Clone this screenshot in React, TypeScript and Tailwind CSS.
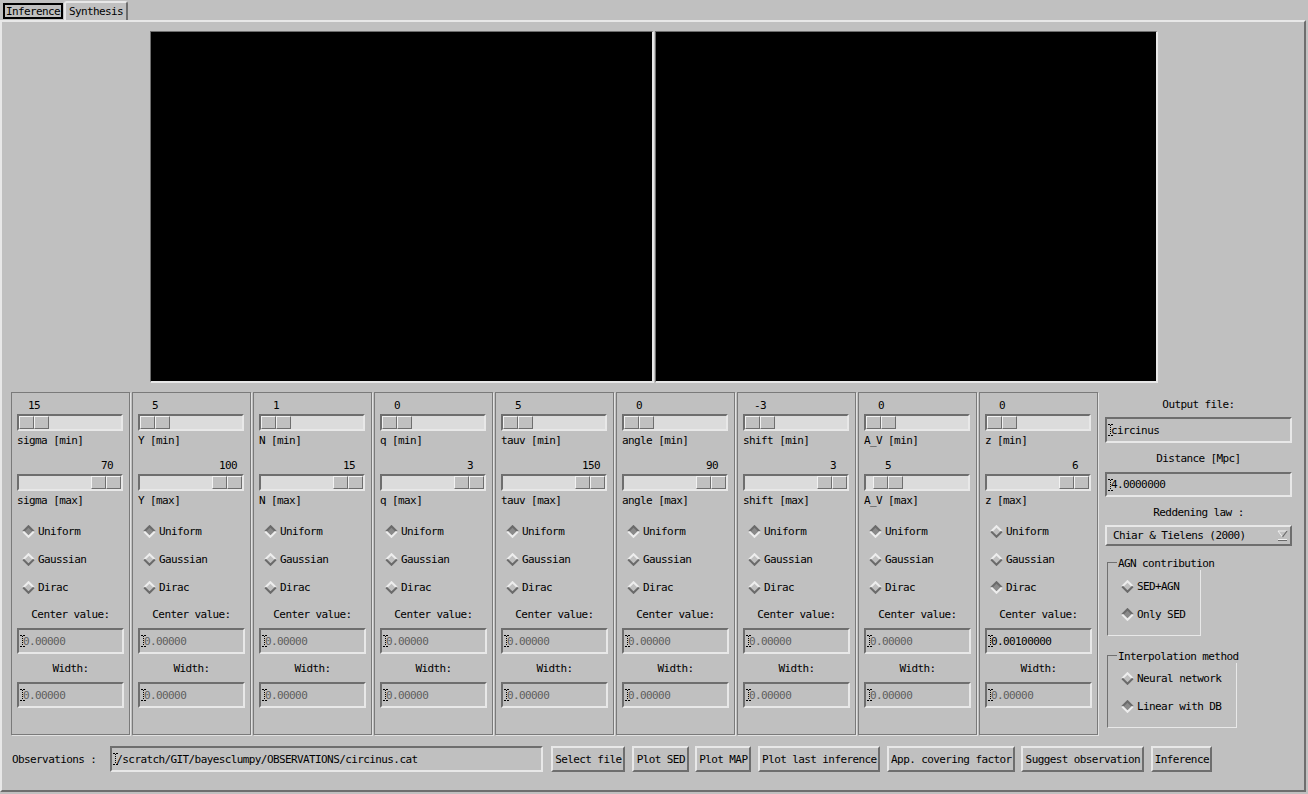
import React from 'react';

type Col = {
  name: string;
  min: string;
  max: string;
  maxPos: 'right' | 'near';
  dist: 'Uniform' | 'Gaussian' | 'Dirac';
  center: string;
  centerOn?: boolean;
};

const cols: Col[] = [
  { name: 'sigma', min: '15', max: '70', maxPos: 'right', dist: 'Uniform', center: '0.00000' },
  { name: 'Y', min: '5', max: '100', maxPos: 'right', dist: 'Uniform', center: '0.00000' },
  { name: 'N', min: '1', max: '15', maxPos: 'right', dist: 'Uniform', center: '0.00000' },
  { name: 'q', min: '0', max: '3', maxPos: 'right', dist: 'Uniform', center: '0.00000' },
  { name: 'tauv', min: '5', max: '150', maxPos: 'right', dist: 'Uniform', center: '0.00000' },
  { name: 'angle', min: '0', max: '90', maxPos: 'right', dist: 'Uniform', center: '0.00000' },
  { name: 'shift', min: '-3', max: '3', maxPos: 'right', dist: 'Uniform', center: '0.00000' },
  { name: 'A_V', min: '0', max: '5', maxPos: 'near', dist: 'Uniform', center: '0.00000' },
  { name: 'z', min: '0', max: '6', maxPos: 'right', dist: 'Dirac', center: '0.00100000', centerOn: true },
];

const buttons = [
  { label: 'Select file', w: 'w-[74px]', ml: 'ml-[8px]' },
  { label: 'Plot SED', w: 'w-[57px]', ml: 'ml-[7px]' },
  { label: 'Plot MAP', w: 'w-[56px]', ml: 'ml-[6px]' },
  { label: 'Plot last inference', w: 'w-[122px]', ml: 'ml-[7px]' },
  { label: 'App. covering factor', w: 'w-[128px]', ml: 'ml-[7px]' },
  { label: 'Suggest observation', w: 'w-[123px]', ml: 'ml-[6px]' },
  { label: 'Inference', w: 'w-[61px]', ml: 'ml-[7px]' },
];

const raised = 'border-2 border-t-[#e8e8e8] border-l-[#e8e8e8] border-b-[#6e6e6e] border-r-[#6e6e6e]';
const sunken = 'border-2 border-t-[#6e6e6e] border-l-[#6e6e6e] border-b-[#e8e8e8] border-r-[#e8e8e8]';

function Diamond({ on }: { on: boolean }) {
  return (
    <svg width="13" height="13" viewBox="0 0 13 13" className="shrink-0">
      <polygon points="6.5,1.5 11.5,6.5 6.5,11.5 1.5,6.5" fill={on ? '#8a8a8a' : '#c0c0c0'} />
      <polyline points="1.2,6.5 6.5,1.2 11.8,6.5" fill="none" stroke={on ? '#6a6a6a' : '#ededed'} strokeWidth="2" />
      <polyline points="1.2,6.5 6.5,11.8 11.8,6.5" fill="none" stroke={on ? '#ededed' : '#6a6a6a'} strokeWidth="2" />
    </svg>
  );
}

function Radio({ label, on }: { label: string; on: boolean }) {
  return (
    <div className="h-[28px] flex items-center gap-[3px]">
      <Diamond on={on} />
      <span>{label}</span>
    </div>
  );
}

function Caret() {
  return (
    <svg width="5" height="12" viewBox="0 0 5 12" className="shrink-0">
      <path d="M0 0.5h2M3 0.5h2M0 11.5h2M3 11.5h2" stroke="#000" strokeWidth="1" />
      <path d="M2.5 1v10" stroke="#000" strokeWidth="1" strokeDasharray="1 1" />
    </svg>
  );
}

function Field({ text, dim, h = 'h-[26px]' }: { text: string; dim?: boolean; h?: string }) {
  return (
    <div className={`${h} ${sunken} flex items-center pl-[1px] bg-[#c0c0c0]`}>
      <Caret />
      <span className={`-ml-[2px] whitespace-nowrap ${dim ? 'text-[#5e5e5e]' : 'text-black'}`}>{text}</span>
    </div>
  );
}

function Thumb() {
  return (
    <div className="flex">
      <div className="w-[15px] h-[13px] bg-[#c0c0c0] border border-t-[#f2f2f2] border-l-[#f2f2f2] border-b-[#6e6e6e] border-r-[#6e6e6e]" />
      <div className="w-[15px] h-[13px] bg-[#c0c0c0] border border-t-[#f2f2f2] border-l-[#f2f2f2] border-b-[#6e6e6e] border-r-[#6e6e6e]" />
    </div>
  );
}

function Slider({ value, pos }: { value: string; pos: 'left' | 'right' | 'near' }) {
  const just = pos === 'right' ? 'justify-end pr-[2px]' : pos === 'near' ? 'justify-start pl-[9px]' : 'justify-start pl-[2px]';
  const trackJust = pos === 'right' ? 'justify-end' : pos === 'near' ? 'justify-start pl-[7px]' : 'justify-start';
  return (
    <>
      <div className={`h-[14px] flex items-center ${just}`}>
        <span className="w-[30px] text-center">{value}</span>
      </div>
      <div className={`mt-[2px] h-[17px] w-[106px] bg-[#dcdcdc] ${sunken} flex ${trackJust}`}>
        <Thumb />
      </div>
    </>
  );
}

function ParamColumn({ c }: { c: Col }) {
  return (
    <div className="w-[119px] h-[343px] shrink-0 border border-[#7a7a7a] shadow-[1px_1px_0_#e2e2e2] flex flex-col px-[5px] pt-[5px]">
      <Slider value={c.min} pos="left" />
      <div className="h-[18px] flex items-center whitespace-nowrap">{c.name} [min]</div>
      <div className="mt-[9px]">
        <Slider value={c.max} pos={c.maxPos} />
      </div>
      <div className="h-[18px] flex items-center whitespace-nowrap">{c.name} [max]</div>
      <div className="mt-[8px] pl-[5px]">
        <Radio label="Uniform" on={c.dist === 'Uniform'} />
        <Radio label="Gaussian" on={c.dist === 'Gaussian'} />
        <Radio label="Dirac" on={c.dist === 'Dirac'} />
      </div>
      <div className="mt-[6px] h-[14px] flex items-center justify-center">Center value:</div>
      <div className="mt-[7px]">
        <Field text={c.center} dim={!c.centerOn} />
      </div>
      <div className="mt-[7px] h-[14px] flex items-center justify-center">Width:</div>
      <div className="mt-[7px]">
        <Field text="0.00000" dim />
      </div>
    </div>
  );
}

function DropArrow() {
  return (
    <svg width="11" height="11" viewBox="0 0 11 11">
      <polygon points="1,1 10,1 5.5,7" fill="#c0c0c0" />
      <polyline points="5.5,7 1,1 10,1" fill="none" stroke="#f0f0f0" strokeWidth="1" />
      <polyline points="10,1 5.5,7" fill="none" stroke="#6a6a6a" strokeWidth="1.2" />
      <path d="M1 9.5h9" stroke="#f0f0f0" strokeWidth="1" />
      <path d="M1 10.5h9" stroke="#6a6a6a" strokeWidth="1" />
    </svg>
  );
}

function Group({ title, w, h, pt, items }: { title: string; w: string; h: string; pt: string; items: { label: string; on: boolean }[] }) {
  return (
    <div className={`relative ml-[2px] ${w} ${h} border border-t-[#707070] border-l-[#707070] border-r-[#e8e8e8] border-b-[#e8e8e8]`}>
      <span className="absolute left-[9px] -top-[7px] h-[14px] px-[1px] bg-[#c0c0c0] flex items-center whitespace-nowrap">
        {title}
      </span>
      <div className={`${pt} pl-[13px]`}>
        {items.map((it) => (
          <Radio key={it.label} label={it.label} on={it.on} />
        ))}
      </div>
    </div>
  );
}

export default function App() {
  return (
    <div className="w-[1308px] h-[794px] bg-[#c0c0c0] font-['DejaVu_Sans_Mono',monospace] text-[11px] tracking-[-0.6px] leading-none text-black overflow-hidden">
      {/* tabs */}
      <div className="flex h-[20px] items-end pl-[2px]">
        <div className="w-[62px] h-[20px] flex items-end">
          <div className="ml-[1px] mb-[1px] w-[60px] h-[16px] border-2 border-black flex items-center justify-center">
            Inference
          </div>
        </div>
        <div className="w-[64px] h-[19px] border-2 border-b-0 border-t-[#e8e8e8] border-l-[#e8e8e8] border-r-[#6e6e6e] rounded-t-[3px] flex items-center justify-center">
          Synthesis
        </div>
      </div>

      <div className="w-[1306px] h-[772px] border-2 border-t-[#e8e8e8] border-l-[#e8e8e8] border-r-[#6e6e6e] border-b-[#6e6e6e] flex flex-col">
        {/* plot windows */}
        <div className="flex mt-[9px] ml-[148px] gap-[1px]">
          <div className="w-[504px] h-[352px] bg-black border-t border-l border-r-2 border-b-2 border-t-[#6e6e6e] border-l-[#6e6e6e] border-r-[#e8e8e8] border-b-[#e8e8e8]" />
          <div className="w-[503px] h-[352px] bg-black border-t border-l border-r-2 border-b-2 border-t-[#6e6e6e] border-l-[#6e6e6e] border-r-[#e8e8e8] border-b-[#e8e8e8]" />
        </div>

        {/* parameters */}
        <div className="flex items-start mt-[9px] ml-[9px]">
          <div className="flex gap-[2px]">
            {cols.map((c) => (
              <ParamColumn key={c.name} c={c} />
            ))}
          </div>
          <div className="ml-[7px] w-[187px] flex flex-col pt-[5px]">
            <div className="h-[14px] flex items-center justify-center">Output file:</div>
            <div className="mt-[6px]">
              <Field text="circinus" />
            </div>
            <div className="mt-[8px] h-[14px] flex items-center justify-center">Distance [Mpc]</div>
            <div className="mt-[7px]">
              <Field text="4.0000000" h="h-[25px]" />
            </div>
            <div className="mt-[8px] h-[14px] flex items-center justify-center">Reddening law :</div>
            <div className={`mt-[6px] h-[21px] ${raised} flex items-center justify-between pl-[6px] pr-[2px]`}>
              <span className="whitespace-nowrap">Chiar &amp; Tielens (2000)</span>
              <DropArrow />
            </div>
            <div className="mt-[16px]">
              <Group
                title="AGN contribution"
                w="w-[94px]"
                h="h-[74px]"
                pt="pt-[9px]"
                items={[
                  { label: 'SED+AGN', on: false },
                  { label: 'Only SED', on: true },
                ]}
              />
            </div>
            <div className="mt-[19px]">
              <Group
                title="Interpolation method"
                w="w-[130px]"
                h="h-[73px]"
                pt="pt-[8px]"
                items={[
                  { label: 'Neural network', on: false },
                  { label: 'Linear with DB', on: true },
                ]}
              />
            </div>
          </div>
        </div>

        {/* bottom bar */}
        <div className="mt-[11px] h-[26px] flex items-center pl-[10px]">
          <span className="whitespace-nowrap">Observations :</span>
          <div className="ml-[14px] w-[433px]">
            <Field text="/scratch/GIT/bayesclumpy/OBSERVATIONS/circinus.cat" />
          </div>
          {buttons.map((b) => (
            <div
              key={b.label}
              className={`${b.ml} ${b.w} h-[26px] ${raised} flex items-center justify-center whitespace-nowrap`}
            >
              {b.label}
            </div>
          ))}
        </div>
      </div>
    </div>
  );
}
